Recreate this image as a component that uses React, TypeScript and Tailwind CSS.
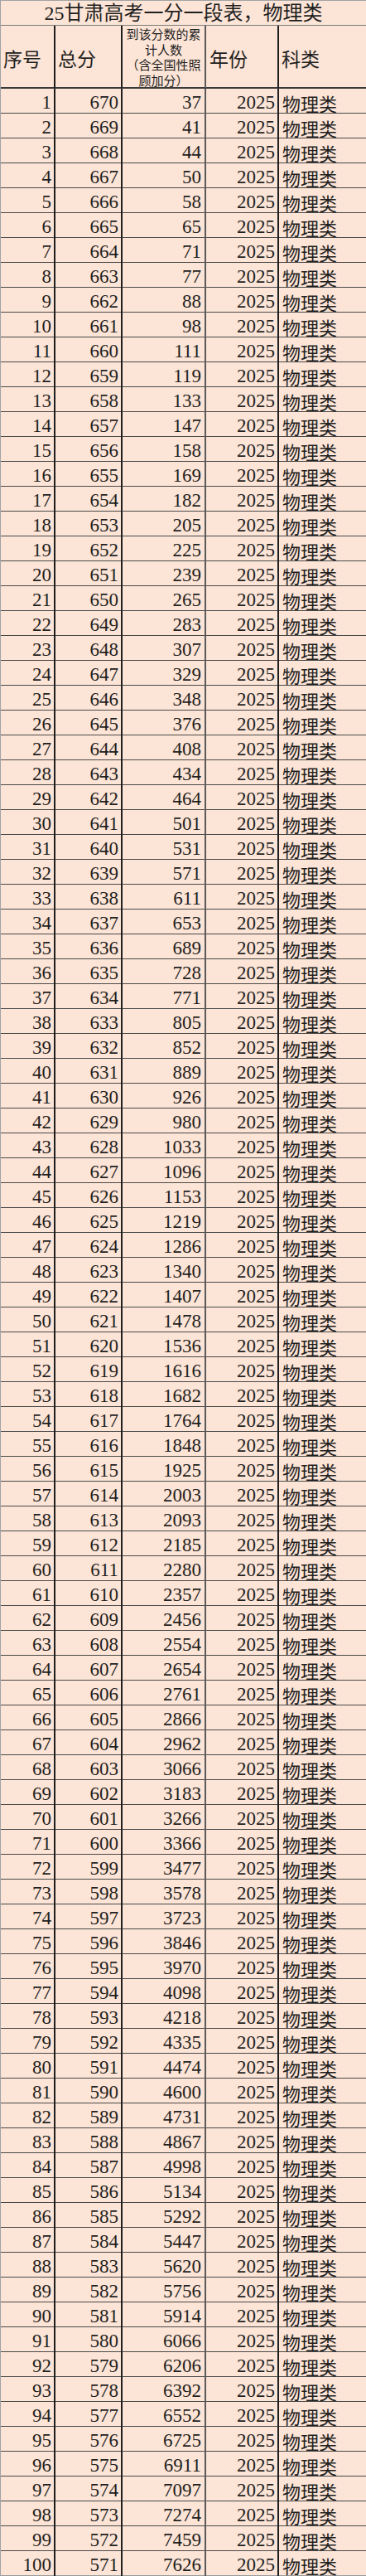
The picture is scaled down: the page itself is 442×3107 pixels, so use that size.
const cumulative = [
  37, 41, 44, 50, 58, 65, 71, 77, 88, 98,
  111, 119, 133, 147, 158, 169, 182, 205, 225, 239,
  265, 283, 307, 329, 348, 376, 408, 434, 464, 501,
  531, 571, 611, 653, 689, 728, 771, 805, 852, 889,
  926, 980, 1033, 1096, 1153, 1219, 1286, 1340, 1407, 1478,
  1536, 1616, 1682, 1764, 1848, 1925, 2003, 2093, 2185, 2280,
  2357, 2456, 2554, 2654, 2761, 2866, 2962, 3066, 3183, 3266,
  3366, 3477, 3578, 3723, 3846, 3970, 4098, 4218, 4335, 4474,
  4600, 4731, 4867, 4998, 5134, 5292, 5447, 5620, 5756, 5914,
  6066, 6206, 6392, 6552, 6725, 6911, 7097, 7274, 7459, 7626,
];

const rows = cumulative.map((count, i) => ({
  no: i + 1,
  score: 670 - i,
  count,
}));

const serif = "font-['Liberation_Serif','Noto_Sans_CJK_SC',serif]";
const cjk = "font-['Noto_Sans_CJK_SC',sans-serif]";
const grid = "grid grid-cols-[66px_81px_101px_88px_1fr]";

export default function App() {
  return (
    <div className="w-[442px] bg-[#fce4d6] text-[#1f1f1f] border-l border-t border-[#a3a3a3]">
      <div
        className={`h-[30px] border-b border-[#7a7a7a] text-center text-[24px] leading-[30px] ${serif}`}
      >
        25甘肃高考一分一段表，物理类
      </div>

      <div className={`${grid} h-[76px] border-b-2 border-[#3a3a3a]`}>
        <div className={`flex items-center pl-[3px] pt-[4px] border-r-2 border-[#1f1f1f] text-[23px] ${cjk}`}>
          序号
        </div>
        <div className={`flex items-center pl-[3px] pt-[4px] border-r-2 border-[#1f1f1f] text-[23px] ${cjk}`}>
          总分
        </div>
        <div
          className={`border-r-2 border-[#5a5a5a] pt-[1px] text-center text-[15px] leading-[18.5px] ${cjk}`}
        >
          到该分数的累
          <br />
          计人数
          <br />
          （含全国性照
          <br />
          顾加分）
        </div>
        <div className={`flex items-center pl-[4px] pt-[4px] border-r-2 border-[#1f1f1f] text-[23px] ${cjk}`}>
          年份
        </div>
        <div className={`flex items-center pl-[3px] pt-[4px] text-[23px] ${cjk}`}>
          科类
        </div>
      </div>

      {rows.map((r, i) => (
        <div
          key={r.no}
          className={`${grid} h-[30px] ${
            i === rows.length - 1
              ? "border-b border-[#9a9a9a]"
              : "border-b-[1.5px] border-[#4a4a4a]"
          }`}
        >
          <div className={`flex items-center justify-end pr-[3px] border-r-2 border-[#1f1f1f] text-[23px] ${serif}`}>
            {r.no}
          </div>
          <div className={`flex items-center justify-end pr-[3px] border-r-2 border-[#1f1f1f] text-[23px] ${serif}`}>
            {r.score}
          </div>
          <div className={`flex items-center justify-end pr-[4px] border-r-2 border-[#5a5a5a] text-[23px] ${serif}`}>
            {r.count}
          </div>
          <div className={`flex items-center justify-end pr-[3px] border-r-2 border-[#1f1f1f] text-[23px] ${serif}`}>
            2025
          </div>
          <div className={`flex items-center pl-[4px] text-[22px] ${cjk}`}>
            物理类
          </div>
        </div>
      ))}
    </div>
  );
}
